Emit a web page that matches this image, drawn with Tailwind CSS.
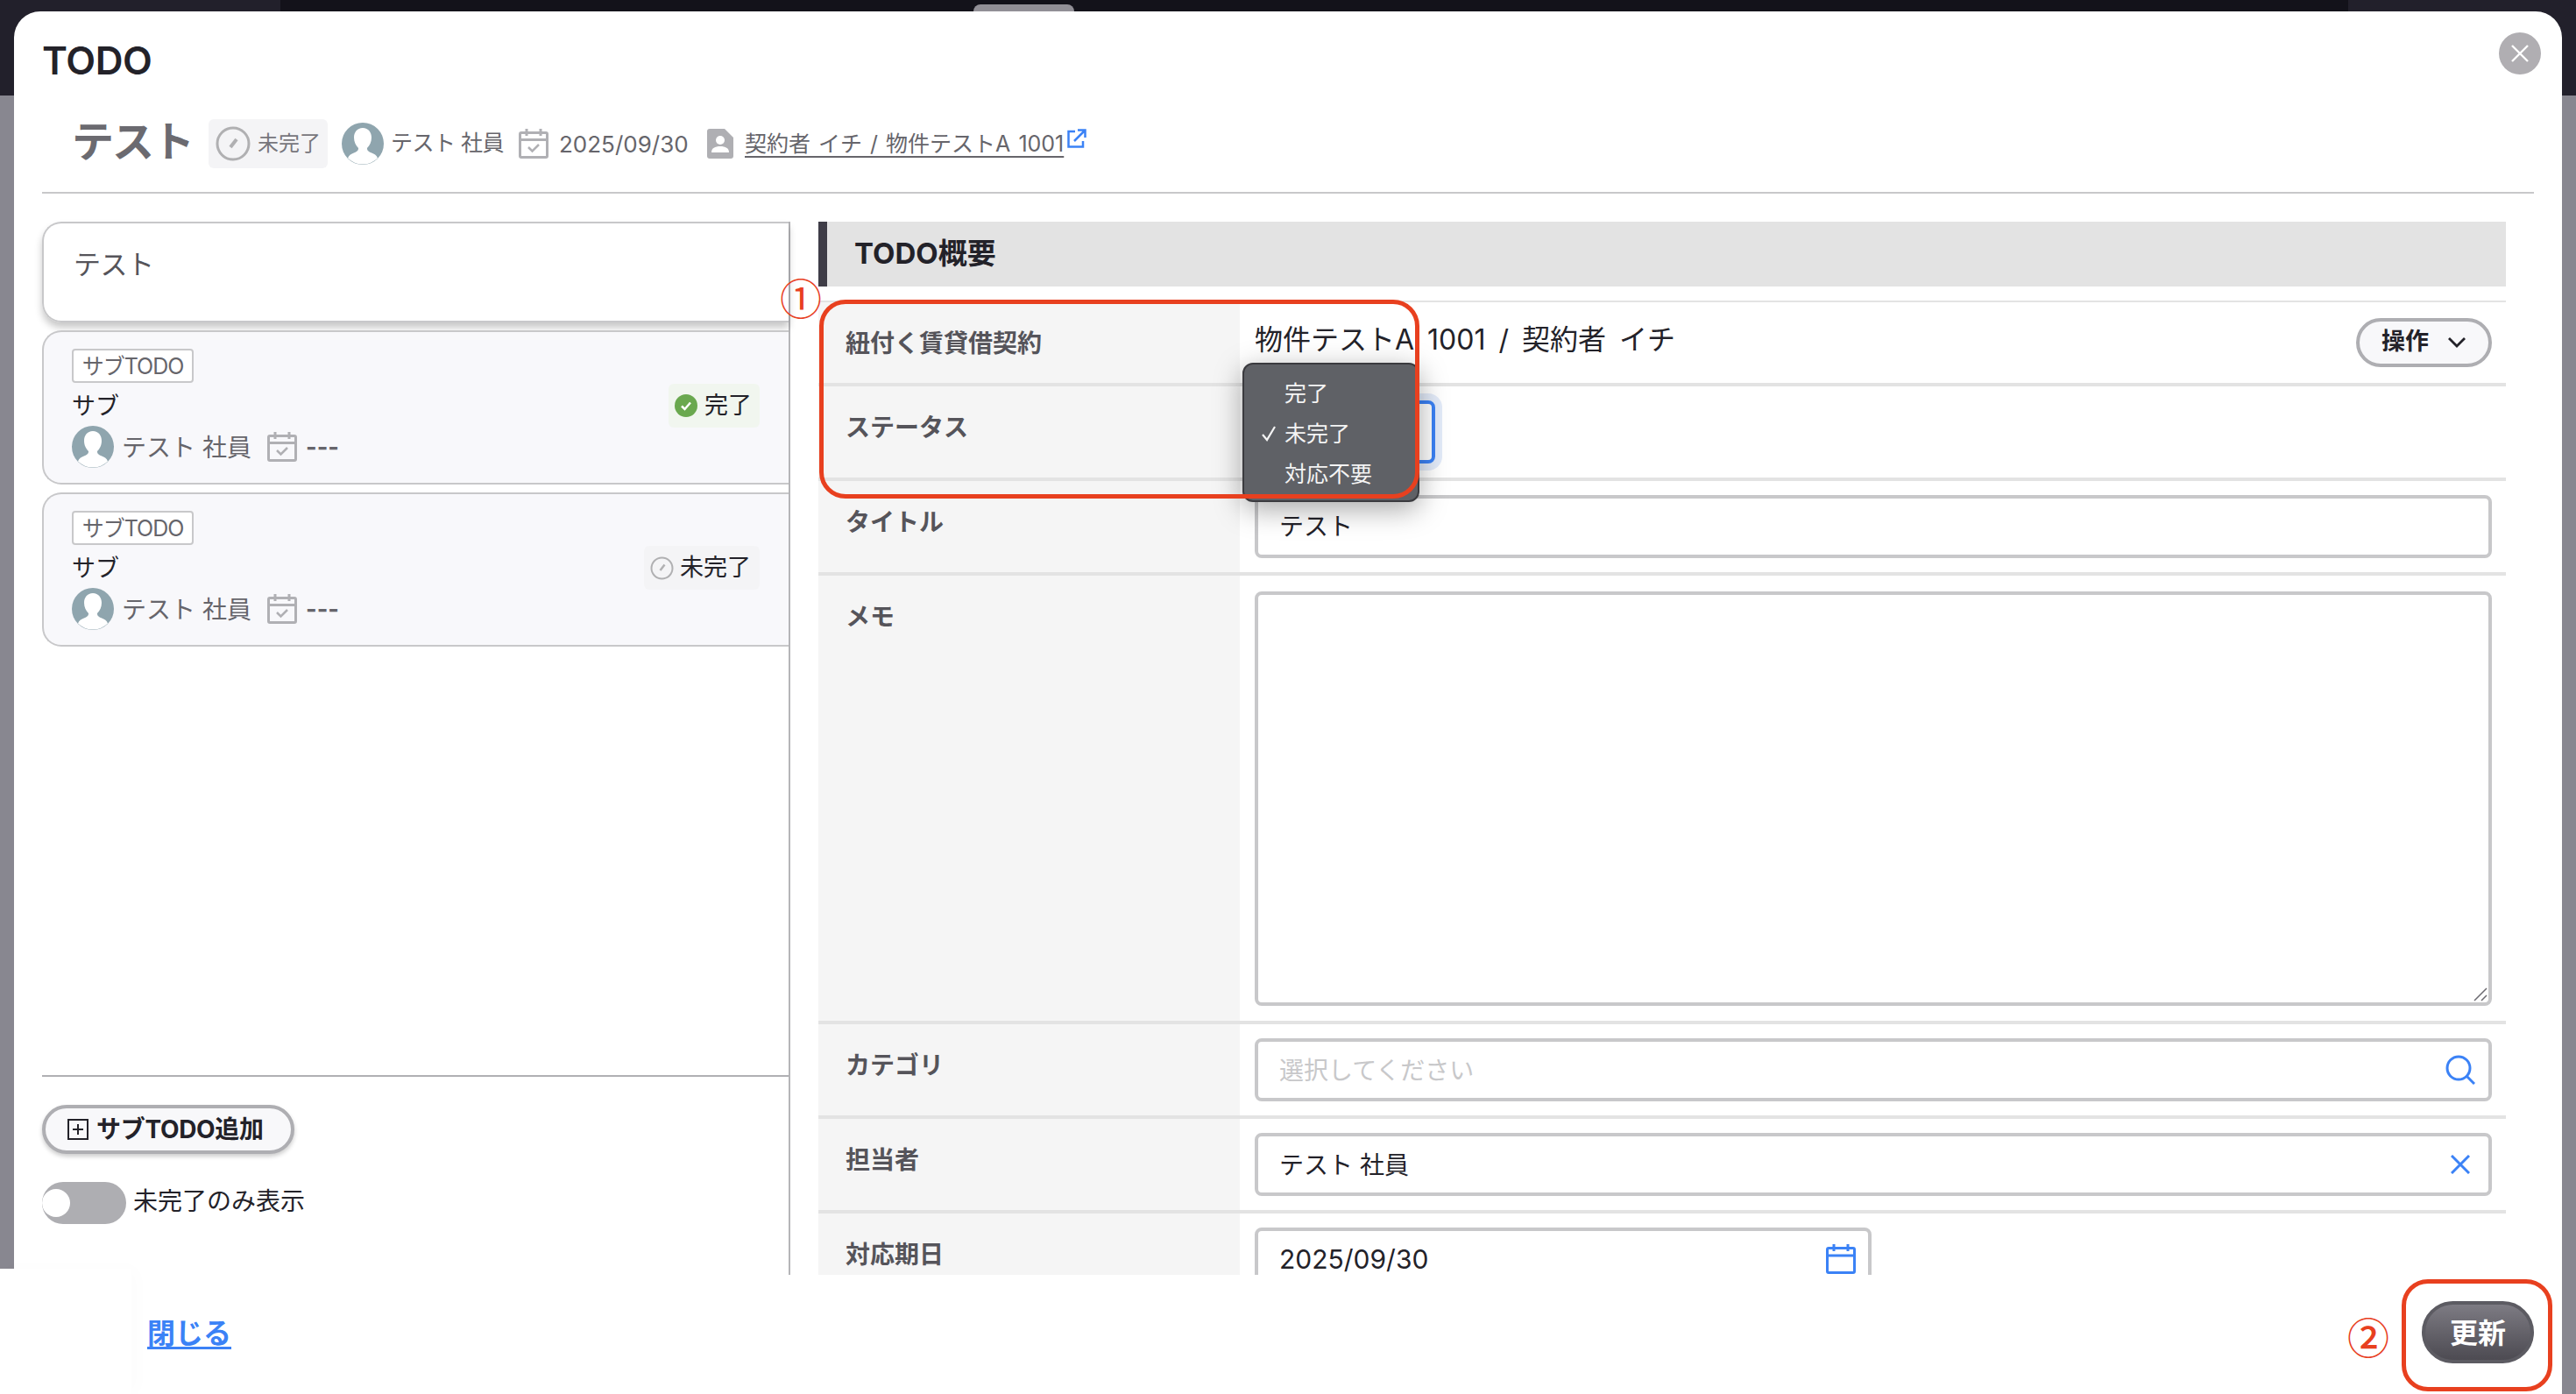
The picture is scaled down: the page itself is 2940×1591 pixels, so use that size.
<!DOCTYPE html>
<html lang="ja">
<head>
    <meta charset="UTF-8">
    <title>TODO</title>
    <script src="https://cdn.jsdelivr.net/npm/@tailwindcss/browser@4"></script>
</head>
<body class="relative w-[2940px] h-[1591px] overflow-hidden bg-[#888790] text-[#232229] font-['Inter','Noto_Sans_CJK_JP',sans-serif]">
    <!-- backdrop -->
    <div class="absolute inset-x-0 top-0 h-[109px] bg-[#22202b]"></div>
    <div class="absolute left-[320px] top-0 w-[2360px] h-[13px] bg-[#13121a]"></div>
    <div class="absolute left-[1111px] top-[5px] w-[115px] h-[8px] rounded-t-[8px] bg-[#918f96]"></div>

    <div class="relative ml-4 mt-[13px] w-[2908px] h-[1578px] rounded-t-[30px] bg-white flex flex-col">
        <!-- close -->
        <button class="absolute right-[24px] top-[24px] w-[48px] h-[48px] rounded-full bg-[#b0aeb2] flex items-center justify-center">
            <svg class="w-[20px] h-[20px]" viewBox="0 0 20 20" fill="none" stroke="#fff" stroke-width="2.4"><path d="M1 1l18 18M19 1L1 19"/></svg>
        </button>

        <div class="h-[206px] px-8 shrink-0">
            <h1 class="h-[78px] pt-[26px] text-[44px] leading-[60px] font-semibold tracking-[-.4px]">TODO</h1>
            <div class="mt-[45px] pl-[34px] flex items-center h-[56px] text-[#66656b]">
                <span class="w-[156px] -mt-[4px] text-[48px] leading-[56px] font-bold text-[#6b6a70] tracking-[-2px]">テスト</span>
                <span class="flex items-center w-[136px] h-[56px] px-2 rounded-md bg-[#f4f4f6] text-[24px] text-[#77767c] whitespace-nowrap">
                    <svg class="w-[40px] h-[40px] mr-[8px] shrink-0" viewBox="0 0 40 40" fill="none" stroke="#b0b0b2" stroke-width="3"><circle cx="20" cy="20" r="18"/><path d="M17 24l7-9" stroke-width="4"/></svg>
                    未完了
                </span>
                <svg class="ml-4 w-[48px] h-[48px] shrink-0" viewBox="0 0 48 48"><circle cx="24" cy="24" r="24" fill="#8fa5ae"/><path d="M24 6c-6.500 0-10 5-10 11 0 5 2 9 5 12 0 2-.5 3.500-4 5-4 1.500-7 3-8 6.500a24 24 0 0 0 34 0c-1-3.500-4-5-8-6.500-3.500-1.500-4-3-4-5 3-3 5-7 5-12 0-6-3.500-11-10-11z" fill="#fff"/></svg>
                <span class="ml-2 w-[126px] text-[25px] whitespace-nowrap tracking-[-.5px]">テスト 社員</span>
                <svg class="ml-5 w-[34px] h-[34px] shrink-0" viewBox="0 0 34 34" fill="none" stroke="#b0b0b4" stroke-width="3"><rect x="1.500" y="4.500" width="31" height="28" rx="1.500"/><path d="M1.500 12.500h31M9 0v8M25 0v8"/><path d="M11 21l4.500 4.500L23 18" stroke-width="2.500"/></svg>
                <span class="ml-3 w-[149px] text-[26px] whitespace-nowrap">2025/09/30</span>
                <svg class="ml-5 w-[30px] h-[34px] shrink-0" viewBox="0 0 30 34"><path d="M3 0h17l10 10v21a3 3 0 0 1-3 3H3a3 3 0 0 1-3-3V3a3 3 0 0 1 3-3z" fill="#afafb3"/><circle cx="15" cy="13" r="5" fill="#fff"/><path d="M5 27c0-5 4-7 10-7s10 2 10 7z" fill="#fff"/></svg>
                <a class="ml-[13px] w-[364px] text-[25px] leading-[36px] underline underline-offset-[5px] whitespace-nowrap [word-spacing:2px]">契約者 イチ / 物件テストA 1001</a>
                <svg class="ml-1 mb-[12px] w-[22px] h-[22px] shrink-0" viewBox="0 0 22 22" fill="none" stroke="#3b82f6" stroke-width="2.500"><path d="M9 3H1.500v17.500H18V14"/><path d="M8 14L20 2M12 1.500h8.500V10"/></svg>
            </div>
        </div>
        <div class="mx-8 w-[2844px] h-[2px] bg-[#c8c8ca] shrink-0"></div>

        <!-- body -->
        <div class="h-[1234px] pt-8 pl-8 flex shrink-0 overflow-hidden">
            <div class="relative w-[854px] border-r-2 border-[#b5b5b8] flex flex-col shrink-0">
                <div class="h-[115px] pl-[34px] pt-[24px] rounded-tl-[22px] rounded-bl-[22px] border-l-2 border-t-2 border-b-2 border-[#c8c8ca] text-[31px] text-[#55545a] shadow-[0_6px_8px_rgba(0,0,0,.22)] tracking-[-.5px]">テスト</div>

                <div class="relative mt-[9px] h-[176px] pl-[32px] pt-[19px] rounded-l-[22px] border-l-2 border-t-2 border-b-2 border-[#c8c8ca] bg-[#f8f8fb]">
                    <span class="flex items-center justify-center w-[139px] h-[39px] pt-[2px] rounded-[4px] border-2 border-[#c8c8ca] bg-white text-[25px] text-[#66656b] tracking-[-1px]">サブTODO</span>
                    <p class="mt-[6px] h-[42px] pt-[1px] text-[27px] leading-[40px]">サブ</p>
                    <div class="flex items-center mt-[1px] h-[48px] text-[#66656b]">
                        <svg class="w-[48px] h-[48px] shrink-0" viewBox="0 0 48 48"><circle cx="24" cy="24" r="24" fill="#8fa5ae"/><path d="M24 6c-6.500 0-10 5-10 11 0 5 2 9 5 12 0 2-.5 3.500-4 5-4 1.500-7 3-8 6.500a24 24 0 0 0 34 0c-1-3.500-4-5-8-6.500-3.500-1.500-4-3-4-5 3-3 5-7 5-12 0-6-3.500-11-10-11z" fill="#fff"/></svg>
                        <span class="ml-[9px] w-[146px] pt-[2px] text-[28px] whitespace-nowrap">テスト 社員</span>
                        <svg class="ml-5 w-[34px] h-[34px] shrink-0" viewBox="0 0 34 34" fill="none" stroke="#b0b0b4" stroke-width="3"><rect x="1.500" y="4.500" width="31" height="28" rx="1.500"/><path d="M1.500 12.500h31M9 0v8M25 0v8"/><path d="M11 21l4.500 4.500L23 18" stroke-width="2.500"/></svg>
                        <span class="ml-[10px] pt-[2px] text-[27px] font-bold">---</span>
                    </div>
                    <span class="absolute right-[33px] top-[59px] flex items-center w-[104px] h-[50px] pl-[7px] rounded-md bg-[#f1f6ef] text-[27px]">
                        <svg class="w-[26px] h-[26px] mr-[8px] shrink-0" viewBox="0 0 26 26"><circle cx="13" cy="13" r="13" fill="#6aa84f"/><path d="M8 13.500l3.500 3.500 6.500-7.500" fill="none" stroke="#fff" stroke-width="2.500"/></svg>
                        完了
                    </span>
                </div>

                <div class="relative mt-[9px] h-[176px] pl-[32px] pt-[19px] rounded-l-[22px] border-l-2 border-t-2 border-b-2 border-[#c8c8ca] bg-[#f8f8fb]">
                    <span class="flex items-center justify-center w-[139px] h-[39px] pt-[2px] rounded-[4px] border-2 border-[#c8c8ca] bg-white text-[25px] text-[#66656b] tracking-[-1px]">サブTODO</span>
                    <p class="mt-[6px] h-[42px] pt-[1px] text-[27px] leading-[40px]">サブ</p>
                    <div class="flex items-center mt-[1px] h-[48px] text-[#66656b]">
                        <svg class="w-[48px] h-[48px] shrink-0" viewBox="0 0 48 48"><circle cx="24" cy="24" r="24" fill="#8fa5ae"/><path d="M24 6c-6.500 0-10 5-10 11 0 5 2 9 5 12 0 2-.5 3.500-4 5-4 1.500-7 3-8 6.500a24 24 0 0 0 34 0c-1-3.500-4-5-8-6.500-3.500-1.500-4-3-4-5 3-3 5-7 5-12 0-6-3.500-11-10-11z" fill="#fff"/></svg>
                        <span class="ml-[9px] w-[146px] pt-[2px] text-[28px] whitespace-nowrap">テスト 社員</span>
                        <svg class="ml-5 w-[34px] h-[34px] shrink-0" viewBox="0 0 34 34" fill="none" stroke="#b0b0b4" stroke-width="3"><rect x="1.500" y="4.500" width="31" height="28" rx="1.500"/><path d="M1.500 12.500h31M9 0v8M25 0v8"/><path d="M11 21l4.500 4.500L23 18" stroke-width="2.500"/></svg>
                        <span class="ml-[10px] pt-[2px] text-[27px] font-bold">---</span>
                    </div>
                    <span class="absolute right-[33px] top-[59px] flex items-center w-[132px] h-[50px] pl-[7px] pt-[1px] rounded-md bg-[#f4f4f6] text-[27px]">
                        <svg class="w-[27px] h-[27px] mr-[7px] shrink-0" viewBox="0 0 27 27" fill="none" stroke="#b0b0b2" stroke-width="2"><circle cx="13.500" cy="13.500" r="12"/><path d="M11.500 16l5-6.500" stroke-width="2.500"/></svg>
                        未完了
                    </span>
                </div>

                <div class="flex-1"></div>
                <div class="h-[228px] border-t-2 border-[#b0b0b3] shrink-0">
                    <button class="mt-[32px] flex items-center w-[288px] h-[56px] pl-[25px] rounded-full border-4 border-[#aeaeb2] bg-[#f8f8fa] shadow-[0_3px_5px_rgba(0,0,0,.2)] text-[28px] leading-[40px] font-bold whitespace-nowrap tracking-[-.3px]">
                        <svg class="w-[24px] h-[24px] mr-[9px] shrink-0" viewBox="0 0 24 24" fill="none" stroke="#232229" stroke-width="2"><rect x="1" y="1" width="22" height="22"/><path d="M12 6v12M6 12h12"/></svg>
                        サブTODO追加
                    </button>
                    <div class="mt-[32px] flex items-center h-[48px]">
                        <span class="flex items-center w-[96px] h-[48px] rounded-full bg-[#aeaeb2] overflow-hidden">
                            <span class="w-[32px] h-[32px] rounded-full bg-white"></span>
                        </span>
                        <span class="ml-2 -mt-[4px] text-[28px]">未完了のみ表示</span>
                    </div>
                </div>
            </div>

            <!-- detail -->
            <div class="ml-[32px] w-[1926px] shrink-0">
                <h2 class="h-[74px] pl-[31px] border-l-[10px] border-[#3f3d47] bg-[#e3e3e3] text-[33px] leading-[72px] font-bold">TODO概要</h2>
                <div class="mt-[16px] h-[2px] bg-[#e3e3e3]"></div>

                <div class="flex h-[92px] border-b-4 border-[#e3e3e3] box-content">
                    <div class="w-[481px] pl-[31px] pt-[29px] bg-[#f5f5f5] text-[28px] leading-[36px] font-bold text-[#55545a] shrink-0">紐付く賃貸借契約</div>
                    <div class="flex-1 flex items-center pl-[17px] pr-[16px] pb-[6px]">
                        <span class="text-[32px] [word-spacing:6px]">物件テストA 1001 / 契約者 イチ</span>
                        <button class="ml-auto mt-[5px] flex items-center w-[155px] h-[56px] pl-[25px] rounded-full border-4 border-[#aeaeb2] bg-[#f8f8fa] text-[27px] font-bold">
                            操作
                            <svg class="ml-[21px] w-[22px] h-[14px]" viewBox="0 0 22 14" fill="none" stroke="#232229" stroke-width="2.800"><path d="M2 2l9 9 9-9"/></svg>
                        </button>
                    </div>
                </div>

                <div class="flex h-[104px] border-b-4 border-[#e3e3e3] box-content">
                    <div class="w-[481px] pl-[31px] pt-[29px] bg-[#f5f5f5] text-[28px] leading-[36px] font-bold text-[#55545a] shrink-0">ステータス</div>
                    <div class="pl-[17px] pt-[16px]">
                        <div class="w-[206px] h-[72px] rounded-[8px] border-4 border-[#3b82f6] shadow-[0_0_0_8px_#e3ebf9] bg-white"></div>
                    </div>
                </div>

                <div class="flex h-[104px] border-b-4 border-[#e3e3e3] box-content">
                    <div class="w-[481px] pl-[31px] pt-[29px] bg-[#f5f5f5] text-[28px] leading-[36px] font-bold text-[#55545a] shrink-0">タイトル</div>
                    <div class="flex-1 pl-[17px] pr-[16px] pt-[16px]">
                        <div class="flex items-center h-[72px] pl-[24px] rounded-[8px] border-4 border-[#c8c8ca] bg-white text-[28px]">テスト</div>
                    </div>
                </div>

                <div class="flex h-[508px] border-b-4 border-[#e3e3e3] box-content">
                    <div class="w-[481px] pl-[31px] pt-[29px] bg-[#f5f5f5] text-[28px] leading-[36px] font-bold text-[#55545a] shrink-0">メモ</div>
                    <div class="flex-1 pl-[17px] pr-[16px] pt-[18px]">
                        <div class="relative h-[473px] rounded-[8px] border-4 border-[#c8c8ca] bg-white">
                            <svg class="absolute right-[1px] bottom-[1px] w-[16px] h-[16px]" viewBox="0 0 16 16" fill="none" stroke="#6b6a70" stroke-width="1.500"><path d="M1 15L15 1M9 15l6-6"/></svg>
                        </div>
                    </div>
                </div>

                <div class="flex h-[104px] border-b-4 border-[#e3e3e3] box-content">
                    <div class="w-[481px] pl-[31px] pt-[29px] bg-[#f5f5f5] text-[28px] leading-[36px] font-bold text-[#55545a] shrink-0">カテゴリ</div>
                    <div class="flex-1 pl-[17px] pr-[16px] pt-[16px]">
                        <div class="flex items-center justify-between h-[72px] pl-[24px] pr-[15px] rounded-[8px] border-4 border-[#c8c8ca] bg-white text-[28px] text-[#c8c8ca]">
                            <span class="pt-[2px]">選択してください</span>
                            <svg class="w-[34px] h-[34px]" viewBox="0 0 34 34" fill="none" stroke="#3b82f6" stroke-width="3"><circle cx="15" cy="15" r="13"/><path d="M24.500 24.500L33 33"/></svg>
                        </div>
                    </div>
                </div>

                <div class="flex h-[104px] border-b-4 border-[#e3e3e3] box-content">
                    <div class="w-[481px] pl-[31px] pt-[29px] bg-[#f5f5f5] text-[28px] leading-[36px] font-bold text-[#55545a] shrink-0">担当者</div>
                    <div class="flex-1 pl-[17px] pr-[16px] pt-[16px]">
                        <div class="flex items-center justify-between h-[72px] pl-[24px] pr-[21px] rounded-[8px] border-4 border-[#c8c8ca] bg-white text-[28px]">
                            <span class="pt-[2px]">テスト 社員</span>
                            <svg class="w-[22px] h-[22px]" viewBox="0 0 22 22" fill="none" stroke="#3b82f6" stroke-width="3"><path d="M1 1l20 20M21 1L1 21"/></svg>
                        </div>
                    </div>
                </div>

                <div class="flex h-[104px]">
                    <div class="w-[481px] pl-[31px] pt-[29px] bg-[#f5f5f5] text-[28px] leading-[36px] font-bold text-[#55545a] shrink-0">対応期日</div>
                    <div class="pl-[17px] pt-[16px]">
                        <div class="flex items-center justify-between w-[704px] h-[72px] pl-[24px] pr-[14px] rounded-[8px] border-4 border-[#c8c8ca] bg-white text-[30px]">
                            2025/09/30
                            <svg class="w-[34px] h-[34px]" viewBox="0 0 34 34" fill="none" stroke="#3b82f6" stroke-width="3"><rect x="1.500" y="4.500" width="31" height="28" rx="1.500"/><path d="M1.500 13h31M9 0v8M25 0v8"/></svg>
                        </div>
                    </div>
                </div>
            </div>
        </div>

        <!-- footer -->
        <div class="flex-1 relative z-10 flex items-center justify-between bg-white pl-[152px] pr-[32px] pb-[4px]">
            <a class="pt-[2px] text-[32px] font-bold text-[#3b82f6] underline underline-offset-[4px]">閉じる</a>
            <button class="mb-[1px] w-[128px] h-[71px] pt-[3px] rounded-full border-4 border-[#5c5b62] bg-linear-to-b from-[#7d7b83] to-[#4d4b52] text-[32px] font-bold text-white">更新</button>
        </div>
    </div>

    <!-- left block of the footer, over the backdrop -->
    <div class="absolute left-0 top-[1448px] w-[150px] h-[143px] bg-white shadow-[6px_0_20px_rgba(0,0,0,.015)] z-10"></div>

    <!-- select popup -->
    <div class="absolute left-[1418px] top-[414px] w-[202px] h-[159px] rounded-[12px] border-2 border-[#3b3b3f] bg-[#5f6166] shadow-[0_8px_32px_rgba(0,0,0,.35)] text-[25px] text-[#f4f4f4] z-20 flex flex-col pt-[10px]">
        <span class="h-[46px] pl-[46px] leading-[46px]">完了</span>
        <span class="relative h-[46px] pl-[46px] leading-[46px]">
            <svg class="absolute left-[20px] top-[14px] w-[17px] h-[18px]" viewBox="0 0 17 18" fill="none" stroke="#f4f4f4" stroke-width="2.200"><path d="M1 10l5 6L15 1"/></svg>
            未完了
        </span>
        <span class="h-[46px] pl-[46px] leading-[46px]">対応不要</span>
    </div>

    <!-- annotations -->
    <div class="absolute left-[935px] top-[342px] w-[685px] h-[227px] rounded-[30px] border-[5px] border-[#e8401f] z-30"></div>
    <span class="absolute left-[889px] top-[308px] w-[50px] text-center text-[48px] leading-[60px] text-[#e8401f] z-30 font-['Noto_Sans_CJK_JP',sans-serif]">①</span>
    <div class="absolute left-[2741px] top-[1460px] w-[172px] h-[128px] rounded-[30px] border-[5px] border-[#e8401f] z-30"></div>
    <span class="absolute left-[2678px] top-[1494px] w-[50px] text-center text-[48px] leading-[60px] font-medium text-[#e8401f] z-30 font-['Noto_Sans_CJK_JP',sans-serif]">②</span>
</body>
</html>
